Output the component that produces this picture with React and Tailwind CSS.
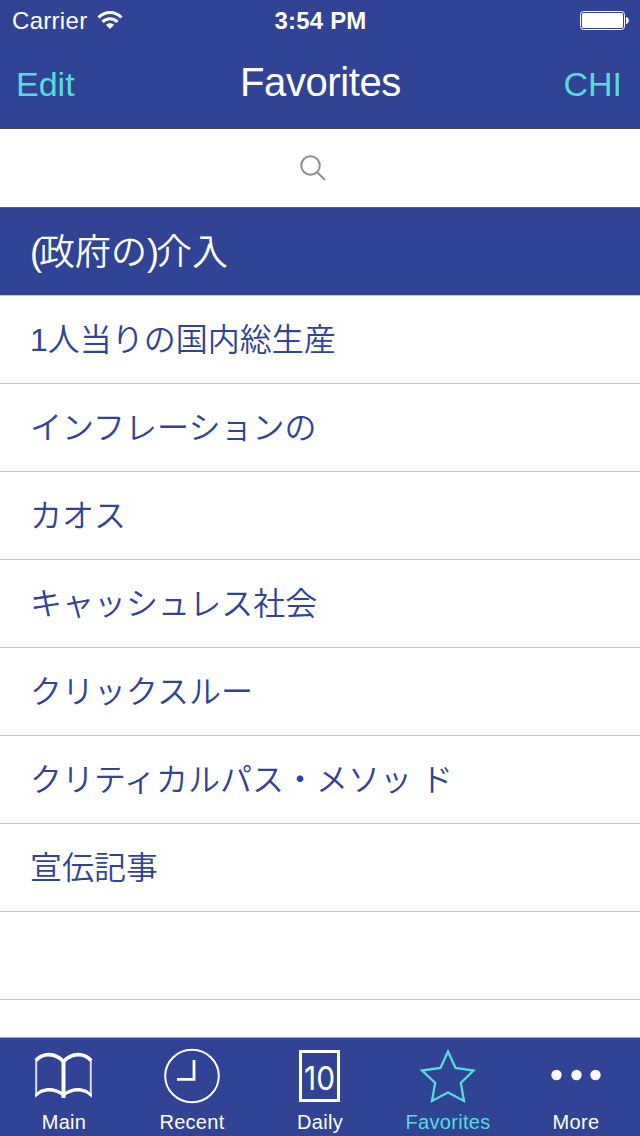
import { useState } from "react";

const words = [
  "1人当りの国内総生産",
  "インフレーションの",
  "カオス",
  "キャッシュレス社会",
  "クリックスルー",
  "クリティカルパス・メソッ ド",
  "宣伝記事",
  "",
];

function BookIcon() {
  return (
    <svg width="60" height="56" viewBox="0 0 60 56" fill="none" stroke="currentColor">
      <path d="M2.200 12V48M56.800 12V48" strokeWidth="2" opacity="0.8" />
      <path d="M29.500 12V50" strokeWidth="4" />
      <path d="M1.800 12.500C9 4.500 21 4.500 29.500 13.500C38 4.500 50 4.500 57.200 12.500" strokeWidth="3.800" />
      <path
        d="M1.200 50V46.500C7 38 22 38 29.500 45.500C37 38 52 38 57.800 46.500V50C51 41.500 38 41.500 29.500 49C21 41.500 8 41.500 1.200 50Z"
        fill="currentColor"
        stroke="none"
      />
    </svg>
  );
}

function ClockIcon() {
  return (
    <svg width="56" height="56" viewBox="0 0 56 56" fill="none" stroke="currentColor">
      <ellipse cx="28" cy="28" rx="26.800" ry="26.200" strokeWidth="2" />
      <path d="M30 12V31.300H13" strokeWidth="2.800" />
    </svg>
  );
}

function DayIcon() {
  return (
    <svg width="42" height="56" viewBox="0 0 42 56" fill="none">
      <rect x="1.500" y="3.500" width="38" height="49" stroke="currentColor" strokeWidth="3" />
      <text
        x="20.500"
        y="42"
        textAnchor="middle"
        fontSize="33"
        textLength="31"
        lengthAdjust="spacingAndGlyphs"
        fill="currentColor"
        className="font-['Inter',sans-serif] tracking-normal"
      >
        10
      </text>
    </svg>
  );
}

function StarIcon() {
  return (
    <svg width="56" height="56" viewBox="0 0 56 56" fill="none" stroke="currentColor" strokeWidth="2.300">
      <path d="M28 3.500L35.500 20L53.500 22.500L40.800 35L44 53L28 44.500L12 53L15.200 35L2 22.500L20.500 20Z" />
    </svg>
  );
}

function MoreIcon() {
  return (
    <svg width="56" height="56" viewBox="0 0 56 56" fill="currentColor">
      <circle cx="8.500" cy="27" r="5.200" />
      <circle cx="28.500" cy="27" r="5.200" />
      <circle cx="47.500" cy="27" r="5.200" />
    </svg>
  );
}

const tabs = [
  { label: "Main", icon: <BookIcon /> },
  { label: "Recent", icon: <ClockIcon /> },
  { label: "Daily", icon: <DayIcon /> },
  { label: "Favorites", icon: <StarIcon /> },
  { label: "More", icon: <MoreIcon /> },
];

function StatusBar() {
  return (
    <div className="grid h-10 grid-cols-3 items-center pl-3 pr-[11px] text-2xl text-white">
      <div className="flex items-center gap-2.5">
        <span className="pt-0.5 tracking-[0.3px]">Carrier</span>
        <svg width="26" height="20" viewBox="0 0 26 20" fill="none" stroke="currentColor" strokeWidth="3.200">
          <path d="M1.500 7.500C8 0.800 18 0.800 24.500 7.500" />
          <path d="M5.500 11.800C9.500 7.700 16.500 7.700 20.500 11.800" />
          <path d="M13 19L8.800 14.800C11 12.600 15 12.600 17.200 14.800Z" fill="currentColor" stroke="none" />
        </svg>
      </div>
      <span className="pt-0.5 text-center font-bold tracking-[0.2px]">3:54 PM</span>
      <svg className="justify-self-end" width="49" height="19" viewBox="0 0 49 19" fill="none">
        <rect x="0.500" y="0.500" width="44" height="18" rx="3" stroke="currentColor" />
        <rect x="2" y="2" width="41" height="15" rx="1.500" fill="currentColor" />
        <path d="M46 6C49.700 6.500 49.700 12.500 46 13Z" fill="currentColor" />
      </svg>
    </div>
  );
}

export default function App() {
  const [activeTab, setActiveTab] = useState("Favorites");

  return (
    <div className="flex h-[1136px] w-[640px] flex-col overflow-hidden bg-white font-['Liberation_Sans','Noto_Sans_CJK_JP',sans-serif]">
      <header className="h-[129px] shrink-0 border-b border-[#4a4a4a] bg-[#304395]">
        <StatusBar />
        <div className="grid h-[88px] grid-cols-3 items-center pl-4 pr-[18px] text-[34px] text-[#59dbdd]">
          <button className="text-left">Edit</button>
          <h1 className="pb-1 pl-[3px] text-center text-[40px] tracking-[-0.4px] text-white">Favorites</h1>
          <button className="text-right">CHI</button>
        </div>
      </header>

      {/* Search */}
      <div className="flex h-[79px] shrink-0 items-center justify-center border-b border-[#626262] pr-[15px]">
        <svg width="26" height="26" viewBox="0 0 26 26" fill="none" stroke="#8e8e93" strokeWidth="2">
          <circle cx="10.500" cy="10.500" r="9.300" />
          <path d="M17 17L25 25" />
        </svg>
      </div>

      {/* Word list */}
      <main className="min-h-0 flex-1 overflow-hidden">
        <div className="flex h-[88px] items-center border-b border-[#c8c7cc] bg-[#304395] px-[30px] pt-0.5 text-4xl font-[350] text-white">
          <span className="tracking-[-3px]">(</span>政府の<span className="tracking-[-3px]">)</span>介入
        </div>
        {words.map((word, i) => (
          <div
            key={i}
            className="flex h-[88px] items-center border-b border-[#c8c8c8] px-[30px] text-[32px] font-[350] text-[#304395]"
          >
            {word}
          </div>
        ))}
      </main>

      <nav className="grid h-[99px] shrink-0 grid-cols-5 border-t border-[#a5a5a5] bg-[#304395]">
        {tabs.map((tab) => (
          <button
            key={tab.label}
            onClick={() => setActiveTab(tab.label)}
            className={`flex flex-col items-center pt-2.5 text-xl leading-none tracking-[0.3px] ${
              activeTab === tab.label ? "text-[#59dbdd]" : "text-white"
            }`}
          >
            {tab.icon}
            <span className="mt-2">{tab.label}</span>
          </button>
        ))}
      </nav>
    </div>
  );
}
